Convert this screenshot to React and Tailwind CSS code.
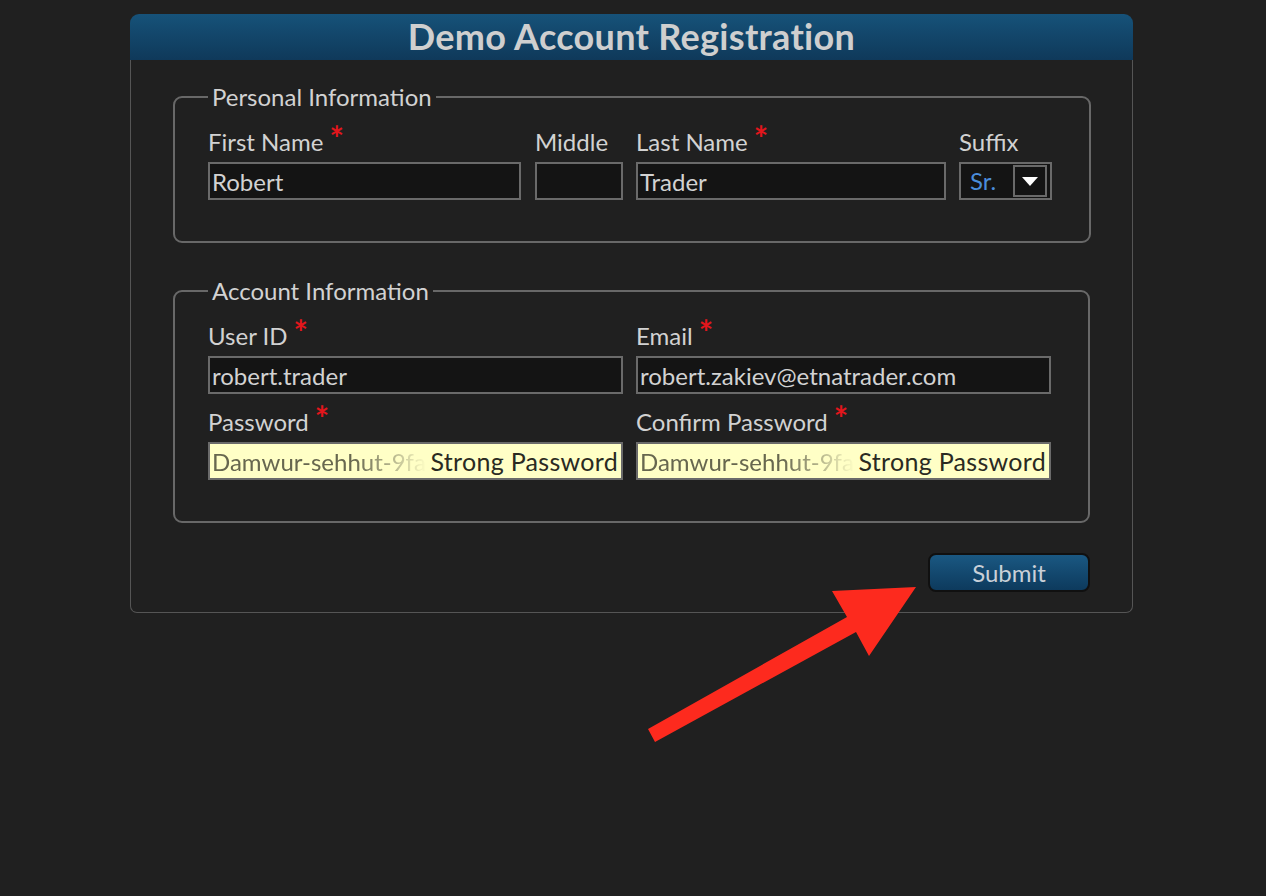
import React from "react";

const font = { fontFamily: "Lato, 'Open Sans', sans-serif" };

function Req() {
  return <span className="ml-[6px] text-[34px] font-bold leading-[0] text-[#e3161c]">*</span>;
}

function Label({ children, required }) {
  return (
    <div className="h-[28px] text-[24px] leading-[28px] text-[#d2d2d2] whitespace-nowrap">
      {children}
      {required && <Req />}
    </div>
  );
}

function TextBox({ value, className = "" }) {
  return (
    <div
      className={`h-[38px] border-2 border-[#6a6a6a] bg-[#141414] px-[2px] text-[24px] leading-[35px] text-[#d2d2d2] whitespace-nowrap overflow-hidden ${className}`}
    >
      {value}
    </div>
  );
}

function PasswordBox() {
  return (
    <div className="flex h-[38px] border-2 border-[#6a6a6a] bg-[#ffffc6] pl-[2px] pr-[3px] text-[24px] leading-[35px] whitespace-nowrap">
      <span className="min-w-0 flex-1 text-[#67674f] [mask-image:linear-gradient(90deg,#000_66%,transparent_100%)]">
        Damwur-sehhut-9fa
      </span>
      <span className="pl-[3px] text-[25px] tracking-[0.3px] text-[#2a2a22]">Strong Password</span>
    </div>
  );
}

function Field({ label, required, children, className = "" }) {
  return (
    <div className={`flex flex-col gap-[6px] ${className}`}>
      <Label required={required}>{label}</Label>
      {children}
    </div>
  );
}

function Group({ title, children }) {
  return (
    <fieldset className="rounded-[9px] border-2 border-[#686868] pt-[17px] pb-[41px] pl-[33px] pr-[37px]">
      <legend className="px-[4px] text-[24px] leading-[28px] text-[#d2d2d2]">{title}</legend>
      {children}
    </fieldset>
  );
}

export default function App() {
  return (
    <div className="relative min-h-[896px] bg-[#202020] pt-[14px]" style={font}>
      <div className="ml-[130px] w-[1003px]">
        <div className="h-[46px] rounded-t-[9px] bg-gradient-to-b from-[#165279] to-[#0f395a] text-center text-[36px] font-bold leading-[44px] tracking-[0.3px] text-[#cfcfcf]">
          Demo Account Registration
        </div>
        <div className="rounded-b-[7px] border-x border-b border-[#555555] px-[42px] pt-[23px] pb-[20px]">
          <Group title="Personal Information">
            <div className="flex">
              <Field label="First Name" required className="w-[313px]">
                <TextBox value="Robert" />
              </Field>
              <Field label="Middle" className="ml-[14px] w-[88px]">
                <TextBox value="" />
              </Field>
              <Field label="Last Name" required className="ml-[13px] w-[310px]">
                <TextBox value="Trader" />
              </Field>
              <Field label="Suffix" className="ml-[13px] w-[93px]">
                <div className="flex h-[38px] items-center justify-between border-2 border-[#6a6a6a] bg-[#141414] pl-[9px] pr-[3px] text-[24px] leading-[34px] text-[#4a8ddb]">
                  <span>Sr.</span>
                  <span className="flex h-[32px] w-[34px] items-center justify-center border-2 border-[#6a6a6a] bg-[#141414]">
                    <svg width="16" height="9" viewBox="0 0 16 9">
                      <path d="M0 0 L16 0 L8 9 Z" fill="#ffffff" />
                    </svg>
                  </span>
                </div>
              </Field>
            </div>
          </Group>

          <div className="mt-[34px]">
            <Group title="Account Information">
              <div className="grid grid-cols-2 gap-x-[13px] gap-y-[14px]">
                <Field label="User ID" required>
                  <TextBox value="robert.trader" />
                </Field>
                <Field label="Email" required>
                  <TextBox value="robert.zakiev@etnatrader.com" />
                </Field>
                <Field label="Password" required>
                  <PasswordBox />
                </Field>
                <Field label="Confirm Password" required>
                  <PasswordBox />
                </Field>
              </div>
            </Group>
          </div>

          <div className="mt-[30px] flex justify-end">
            <button className="h-[39px] w-[162px] rounded-[8px] border-2 border-[#101010] bg-gradient-to-b from-[#1a5882] to-[#0d3a5d] text-[24px] leading-[34px] text-[#c9d0d8]">
              Submit
            </button>
          </div>
        </div>
      </div>

      <svg className="pointer-events-none absolute left-0 top-0" width="1266" height="896" viewBox="0 0 1266 896">
        <polygon
          points="648,729 847,617 832,591 916,587 869,656 856,632 655,742"
          fill="#fd2a1e"
        />
      </svg>
    </div>
  );
}
